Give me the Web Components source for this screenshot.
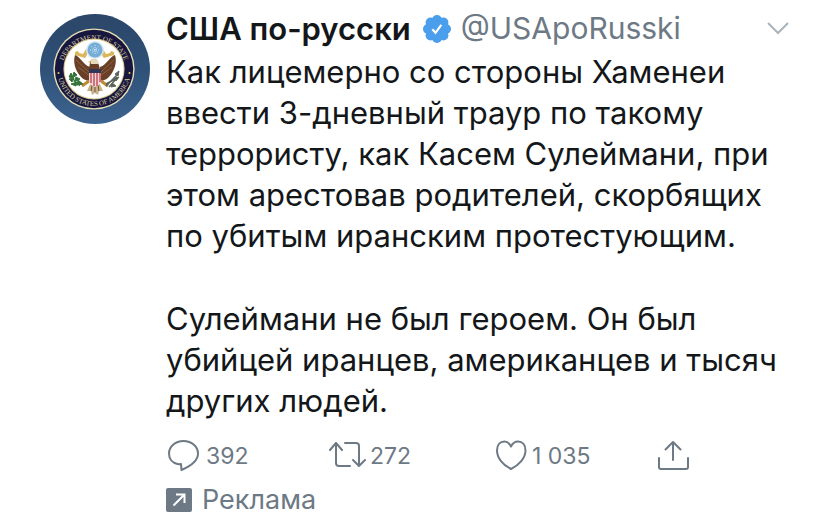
<!DOCTYPE html>
<html lang="ru">
<head>
<meta charset="utf-8">
<meta name="viewport" content="width=device-width, initial-scale=1">
<title>США по-русски</title>
<style>
body{margin:0;background:#fff;color:#14171a;font-family:Inter,"Noto Sans",sans-serif;font-size:31px;line-height:41px}
</style>
</head>
<body>
<tweet-card>
  <seal-avatar slot="avatar"></seal-avatar>
  <tweet-author slot="header" handle="@USApoRusski">США по-русски</tweet-author>
  <tweet-text slot="body">
    <p>Как лицемерно со стороны Хаменеи ввести 3-дневный траур по такому террористу, как Касем Сулеймани, при этом арестовав родителей, скорбящих по убитым иранским протестующим.</p>
    <p>Сулеймани не был героем. Он был убийцей иранцев, американцев и тысяч других людей.</p>
  </tweet-text>
  <tweet-actions slot="actions">
    <tweet-action icon="reply" label="Ответить">392</tweet-action>
    <tweet-action icon="retweet" label="Ретвитнуть">272</tweet-action>
    <tweet-action icon="like" label="Нравится">1 035</tweet-action>
    <tweet-action icon="share" label="Поделиться"></tweet-action>
  </tweet-actions>
  <promo-label slot="footer">Реклама</promo-label>
</tweet-card>
<script>
function define(name, html) {
  customElements.define(name, class extends HTMLElement {
    constructor() {
      super();
      const t = document.createElement('template');
      t.innerHTML = typeof html === 'function' ? html(this) : html;
      this.attachShadow({mode: 'open'}).append(t.content.cloneNode(true));
    }
  });
}

define('tweet-card', `
<style>
:host{display:block}
article{display:grid;grid-template-columns:110px minmax(0,1fr);column-gap:16px;padding:8px 38px 4px 40px}
.avatar{padding-top:6px}
.main{display:flex;flex-direction:column}
</style>
<article>
  <div class="avatar"><slot name="avatar"></slot></div>
  <div class="main"><slot name="header"></slot><slot name="body"></slot><slot name="actions"></slot><slot name="footer"></slot></div>
</article>`);

define('seal-avatar', `
<style>:host{display:block}svg{display:block;width:100%;height:auto}text{font-family:"Liberation Serif",serif;font-size:7px;fill:#dccb9a}</style>
<svg viewBox="0 0 110 110" role="img" aria-label="Department of State">
  <defs>
    <linearGradient id="bg" x1="0" y1="0" x2="0" y2="1"><stop offset="0" stop-color="#2b4668"/><stop offset=".5" stop-color="#2f5178"/><stop offset="1" stop-color="#3c6490"/></linearGradient>
    <path id="top" d="M21.500 58A32.500 32.500 0 1 1 86.500 58"/>
    <path id="bottom" d="M17 55A37 37 0 0 0 91 55"/>
  </defs>
  <circle cx="55" cy="55" r="55" fill="url(#bg)"/>
  <circle cx="54" cy="55" r="40.6" fill="#e9dfb4"/>
  <circle cx="54" cy="55" r="39.2" fill="#16163f"/>
  <circle cx="54" cy="55" r="30.6" fill="#d8c587"/>
  <circle cx="54" cy="55" r="29.6" fill="#fff"/>
  <text text-anchor="middle"><textPath href="#top" startOffset="50%">DEPARTMENT OF STATE</textPath></text>
  <text text-anchor="middle"><textPath href="#bottom" startOffset="50%">UNITED STATES OF AMERICA</textPath></text>
  <circle cx="18.500" cy="59" r="1" fill="#e5ca62"/><circle cx="89.500" cy="59" r="1" fill="#e5ca62"/>
  <g>
    <path d="M45 44l-10-3 0-3 3-1 1 2 4 1 3-5 3 1-3 7zM64 44l10-3 0-3-3-1-1 2-4 1-3-5-3 1 3 7z" fill="#d9b75b"/>
    <circle cx="55" cy="36" r="9" fill="#d8e8f2"/>
    <circle cx="55" cy="36" r="7.5" fill="#75add7"/>
    <path d="M55 31v10M50 36h10M51.500 32.500l7 7M58.500 32.500l-7 7" stroke="#d5ebf6" stroke-width="1" stroke-dasharray="1 1"/>
    <path d="M50 53C43 51 41 43 35 41c-2 7 0 13 3 18 3 5 7 8 13 8zM60 53c7-2 9-10 15-12 2 7 0 13-3 18-3 5-7 8-13 8z" fill="#694027"/>
    <path d="M36 46l13 12M38 53l12 9M74 46L61 58M72 53l-12 9" stroke="#8b6040" stroke-width="1"/>
    <path d="M51 68l-4 9 4 0 1 4 3-2 3 2 1-4 4 0-4-9z" fill="#c7b18b"/>
    <path d="M52 71l-1 6M55 70v8M58 71l1 6" stroke="#745332"/>
    <path d="M49 67l-7 5M61 67l7 5" stroke="#bd8a35" stroke-width="3"/>
    <path d="M49 58c0-5 1-10 2-12 2-2 5-1 6 1 2 3 3 7 3 11z" fill="#694027"/>
    <path d="M51 50c-1-3 0-6 4-5 3 0 4 3 3 5z" fill="#e6d9bd"/><path d="M51 47l-3 1 3 1z" fill="#d29f27"/>
    <path d="M49 56h12v10c0 4-3 6-6 7-3-1-6-3-6-7z" fill="#f0d9d3"/>
    <path d="M51 58v11M54 58v14M57 58v14M60 58v10" stroke="#bf485c" stroke-width="1.400"/>
    <path d="M49 55h12v4H49z" fill="#303756"/>
    <path d="M31 60c1 5 4 8 9 12" fill="none" stroke="#36733b"/>
    <path d="M31 59l-2 4 4 1zM34 58l-2 6 5-3zM29 65l3 3 2-4zM36 63l-2 5 6-3zM31 70l5 2 1-4zM38 66l-1 5 6-1z" fill="#36733b" stroke="#36733b"/>
    <path d="M66 72l12-12M66 70l11-6M69 73l8-9" stroke="#59625b" stroke-width="1.500"/><path d="M75 60l4-3-1 5zM75 64l4-1-3 4zM72 69l4 3-5 1z" fill="#59625b" stroke="#59625b"/>
  </g>
</svg>`);

define('tweet-author', el => `
<style>
:host{display:block;padding-bottom:2px}
header{display:flex;align-items:center}
h1{margin:0;font-size:31px;line-height:41px;font-weight:600}
.badge{width:28px;height:28px;margin:0 10px 0 12px}
a{color:#6d7984;text-decoration:none;font-size:30px}
button{margin-left:auto;padding:0;border:0;background:none;width:24px;height:24px}
button svg{width:24px;height:24px;display:block}
</style>
<header>
  <h1><slot></slot></h1>
  <svg class="badge" viewBox="0 0 28 28" role="img" aria-label="Подтверждённый аккаунт"><g fill="#4a9eec"><circle cx="14" cy="14" r="11"/><circle cx="14" cy="5" r="5"/><circle cx="20.400" cy="7.600" r="5"/><circle cx="23" cy="14" r="5"/><circle cx="20.400" cy="20.400" r="5"/><circle cx="14" cy="23" r="5"/><circle cx="7.600" cy="20.400" r="5"/><circle cx="5" cy="14" r="5"/><circle cx="7.600" cy="7.600" r="5"/></g><path d="M9.300 14.300l3.200 3.500 5.800-8" fill="none" stroke="#fff" stroke-width="2.200"/></svg>
  <a href="#">${el.getAttribute('handle')}</a>
  <button type="button" aria-label="Ещё"><svg viewBox="0 0 24 24" fill="none" stroke="#aab4bc" stroke-width="2"><path d="M2 6l10 10L22 6"/></svg></button>
</header>`);

define('tweet-text', `
<style>:host{display:flex;flex-direction:column;gap:42px}::slotted(p){margin:0}</style><slot></slot>`);

define('tweet-actions', `
<style>:host{display:grid;grid-template-columns:163fr 165fr 162fr 122fr;padding-top:15px;margin-right:12px}</style><slot></slot>`);

const icons = {
  reply: '<path d="M11.500 25C6.500 24 3 20 3 14.500 3 8 9 2 17.500 2S32 8 32 14.500c0 6-6 12-16.500 16.500l-.5-6c-1.500.2-2.500.2-3.500 0z"/>',
  retweet: '<path d="M1 11l6-7 6 7M7 4v20q0 3 3 3h11M16 4h11q3 0 3 3v19M24 21l6 6 6-6"/>',
  like: '<path d="M17 30C9 26 3 19 3 11.500 3 6 6 2.500 10.500 2.500c3 0 5 2 6.500 5 1.500-3 4-5 7-5 4.500 0 7.500 3.500 7.500 9C31.500 19 25 26 17 30z"/>',
  share: '<path d="M17 21V3M9.500 10.500L17 3l7.500 7.500M3 19v9q0 2 2 2h25q2 0 2-2v-9"/>'
};
define('tweet-action', el => {
  const icon = el.getAttribute('icon');
  return `
<style>
:host{display:block}
button{display:flex;align-items:center;gap:${icon === 'reply' ? 6 : 4}px;padding:0;border:0;background:none;color:#6d7984;font:inherit;font-size:23px;line-height:40px;height:40px;white-space:nowrap}
svg{display:block;height:34px}
</style>
<button type="button" aria-label="${el.getAttribute('label')} ${el.textContent}"><svg width="${icon === 'retweet' ? 37 : 34}" viewBox="0 0 ${icon === 'retweet' ? 37 : 34} 34" fill="none" stroke="#6d7984" stroke-width="2" stroke-linecap="round" stroke-linejoin="round">${icons[icon]}</svg><slot></slot></button>`;
});

define('promo-label', `
<style>
:host{display:flex;align-items:center;gap:10px;color:#6d7984;font-size:27px;line-height:40px;padding-top:4px}
svg{display:block;width:26px;height:24px}
</style>
<svg viewBox="0 0 26 24"><rect width="26" height="24" rx="2" fill="#6d7984"/><path d="M7.500 17.500L18.500 6.500M10 6.500h8.500V15" fill="none" stroke="#fff" stroke-width="2"/></svg><span><slot></slot></span>`);
</script>
</body>
</html>
